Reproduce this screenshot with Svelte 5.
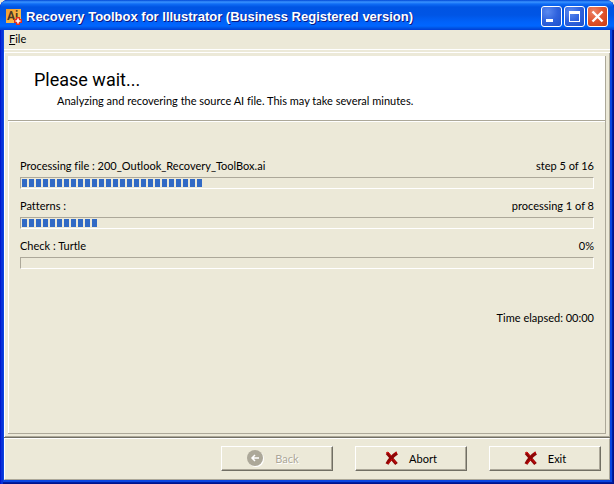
<script>
	let title = 'Recovery Toolbox for Illustrator (Business Registered version)';

	// a block is 5px wide with a 2px gap after it
	const BLOCK = 7;

	let tasks = [
		{ label: 'Processing file : 200_Outlook_Recovery_ToolBox.ai', status: 'step 5 of 16', blocks: 26 },
		{ label: 'Patterns :', status: 'processing 1 of 8', blocks: 11 },
		{ label: 'Check : Turtle', status: '0%', blocks: 0 }
	];

	let elapsed = '00:00';
</script>

<div class="window">
	<header class="titlebar">
		<svg class="app-icon" width="16" height="16" viewBox="0 0 16 16">
			<defs>
				<linearGradient id="amber" x1="0" y1="0" x2="1" y2="1">
					<stop offset="0" stop-color="#f19a2c" />
					<stop offset="1" stop-color="#fbc95a" />
				</linearGradient>
			</defs>
			<rect width="15" height="14" fill="url(#amber)" />
			<text x="1" y="11">Ai</text>
			<path d="M10 8H14V10H16V14H14V16H10V14H8V10H10Z" fill="#e0301e" />
			<path d="M12 9.5V14.5M9.5 12H14.5" stroke="#fff" stroke-width="1.6" />
		</svg>
		<h1>{title}</h1>
		<div class="controls">
			<button class="control" aria-label="Minimize">
				<svg width="19" height="19" viewBox="0 0 19 19"><path d="M4 12H11V15H4Z" fill="#fff" /></svg>
			</button>
			<button class="control" aria-label="Maximize">
				<svg width="19" height="19" viewBox="0 0 19 19">
					<path d="M4 4H15V15H4ZM5 7V14H14V7Z" fill="#fff" fill-rule="evenodd" />
				</svg>
			</button>
			<button class="control close" aria-label="Close">
				<svg width="19" height="19" viewBox="0 0 19 19">
					<path d="M4.5 4.5L14.5 14.5M14.5 4.5L4.5 14.5" stroke="#fff" stroke-width="2.4" />
				</svg>
			</button>
		</div>
	</header>

	<nav class="menu">
		<button><u>F</u>ile</button>
	</nav>

	<main class="page">
		<div class="panel">
			<div class="banner">
				<h2>Please wait...</h2>
				<p>Analyzing and recovering the source AI file. This may take several minutes.</p>
			</div>
			<div class="tasks">
				{#each tasks as task, i}
					<div class="task">
						<div class="row">
							<span id="task-{i}">{task.label}</span>
							<span>{task.status}</span>
						</div>
						<div class="bar" role="progressbar" aria-labelledby="task-{i}" aria-valuetext={task.status}>
							<div class="fill" style="width: {task.blocks * BLOCK}px"></div>
						</div>
					</div>
				{/each}
				<p class="elapsed">Time elapsed: {elapsed}</p>
			</div>
		</div>
	</main>

	{#snippet cross()}
		<svg width="14" height="15" viewBox="0 0 14 15">
			<path d="M2 2L11.5 13M12 2Q6 6 2 13" fill="none" stroke="#8f0505" stroke-width="3.4" />
			<path d="M1 2L3 1L6 5M10 2L12 1M7 8L3 13M8 8L11 12" fill="none" stroke="#d40a0a" stroke-width="1" />
		</svg>
	{/snippet}

	<footer class="actions">
		<button disabled>
			<svg width="18" height="18" viewBox="0 0 18 18">
				<circle cx="9" cy="9" r="8" fill="#fff" />
				<circle cx="8" cy="8" r="8" fill="#aca899" />
				<path d="M12 8H5M8 5L5 8L8 11" fill="none" stroke="#fff" stroke-width="1.5" />
			</svg>
			Back
		</button>
		<button>{@render cross()}Abort</button>
		<button>{@render cross()}Exit</button>
	</footer>
</div>

<style>
	:global(body) {
		margin: 0;
		background: #ece9d8;
	}

	.window {
		display: flex;
		flex-direction: column;
		box-sizing: border-box;
		min-height: 100vh;
		padding: 0 4px 4px;
		border-radius: 8px 8px 0 0;
		background: #0a46e0;
		box-shadow:
			inset 1px 0 #0019cf,
			inset 3px 0 #0831d9,
			inset -1px -1px #00138c,
			inset -2px -2px #001ea0;
		font-family: Lato, 'Liberation Sans', Arial, sans-serif;
		font-size: 11px;
		font-variant-ligatures: none;
		line-height: 16px;
		color: #000;
	}

	h1,
	h2,
	p {
		margin: 0;
	}

	button {
		font: inherit;
		font-variant-ligatures: none;
		color: inherit;
	}

	.titlebar {
		display: flex;
		align-items: center;
		height: 30px;
		margin: 0 -4px;
		padding: 3px 6px 0;
		box-sizing: border-box;
		border-radius: 8px 8px 0 0;
		background: linear-gradient(
			#0046d5 0,
			#3a93ff 2px,
			#0f6cf5 4px,
			#0054e3 7px,
			#0055e5 15px,
			#0062fa 22px,
			#0066ff 26px,
			#0054e3 28px,
			#003dd7 30px
		);
	}

	.app-icon {
		flex: none;
	}

	.app-icon text {
		fill: #4c3826;
		font-family: Roboto, sans-serif;
		font-size: 12px;
		font-weight: bold;
	}

	h1 {
		flex: 1;
		margin-left: 4px;
		overflow: hidden;
		color: #fff;
		font-family: 'Liberation Sans', Arial, sans-serif;
		font-size: 13px;
		font-weight: bold;
		line-height: 20px;
		white-space: nowrap;
		text-shadow: 1px 1px #0a1883;
	}

	.controls {
		display: flex;
		gap: 2px;
	}

	.control {
		width: 21px;
		height: 21px;
		padding: 0;
		border: 1px solid #fff;
		border-radius: 3px;
		background: radial-gradient(circle at 30% 25%, #5b8af0, #2f62dd 50%, #1d50cc);
	}

	.control.close {
		background: radial-gradient(circle at 30% 25%, #ec8468, #e0532c 50%, #c93b12);
	}

	.control svg {
		display: block;
	}

	.menu {
		height: 19px;
		padding-left: 5px;
		background: #ece9d8;
	}

	.menu button {
		display: block;
		padding: 1px 0;
		border: 0;
		background: none;
	}

	.page {
		display: flex;
		flex: 1;
		padding: 3px 4px;
		border-top: 1px solid #fff;
		border-bottom: 1px solid #716f64;
		background: #ece9d8;
		box-shadow:
			inset 0 2px #ece9d8,
			inset 1px 3px #fff,
			inset -1px -1px #aca899;
	}

	.panel {
		flex: 1;
		display: flex;
		flex-direction: column;
		margin-top: 3px;
		border: 1px solid #aca899;
		border-width: 0 1px 1px 0;
	}

	.banner {
		padding: 14px 26px 11px;
		border-bottom: 1px solid #aca899;
		background: #fff;
	}

	h2 {
		font-family: Roboto, sans-serif;
		font-size: 18px;
		font-weight: normal;
		line-height: 20px;
	}

	.banner p {
		padding: 3px 0 0 23px;
	}

	.tasks {
		flex: 1;
		padding: 36px 11px 12px;
		border: 1px solid #fff;
		border-width: 1px 0 0 1px;
	}

	.task {
		margin-bottom: 9px;
	}

	.row {
		display: flex;
		justify-content: space-between;
		margin-bottom: 3px;
	}

	.bar {
		height: 8px;
		padding: 1px;
		border: 1px solid;
		border-color: #aca899 #fff #fff #aca899;
	}

	.fill {
		height: 8px;
		background: repeating-linear-gradient(90deg, #316ac5 0 5px, transparent 5px 7px);
	}

	.elapsed {
		padding-top: 32px;
		text-align: right;
	}

	.actions {
		display: flex;
		justify-content: flex-end;
		gap: 22px;
		padding: 7px 8px 8px;
		border: 1px solid;
		border-color: #fff #aca899 #aca899 #fff;
		background: #ece9d8;
	}

	.actions button {
		display: flex;
		align-items: center;
		justify-content: center;
		gap: 10px;
		width: 112px;
		height: 25px;
		padding: 0;
		border: 1px solid;
		border-color: #fff #716f64 #716f64 #fff;
		background: #ece9d8;
		box-shadow: inset -1px -1px #aca899;
	}

	.actions button:disabled {
		color: #aca899;
		text-shadow: 1px 1px #fff;
	}

	.actions button:disabled svg {
		margin-left: -8px;
	}
</style>
